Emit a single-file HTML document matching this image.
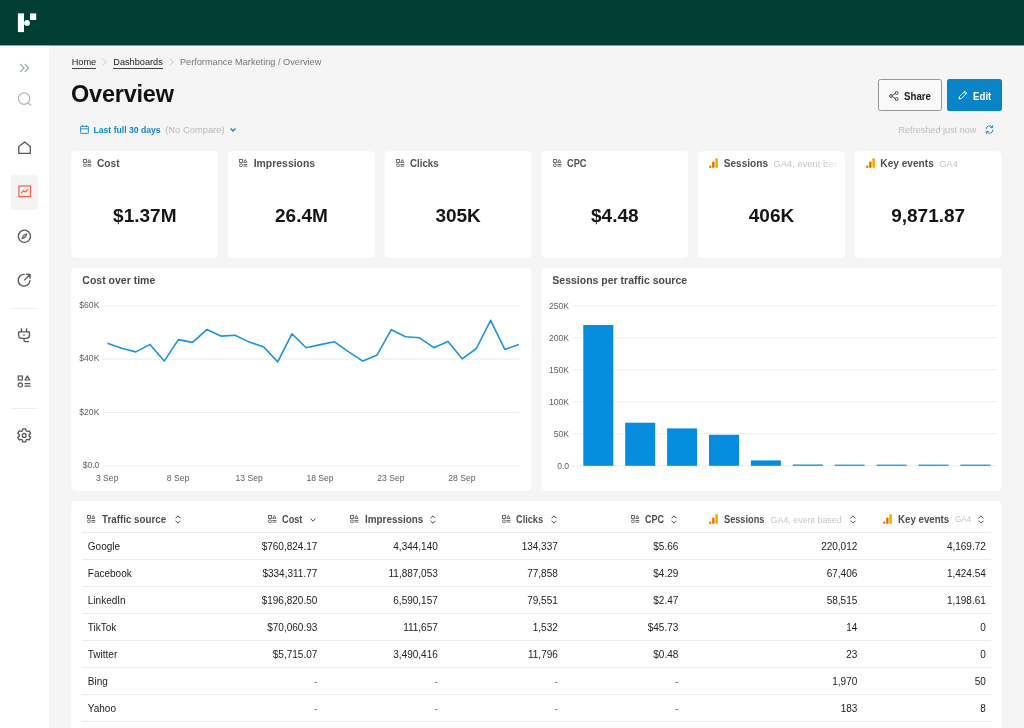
<!DOCTYPE html>
<html lang="en"><head><meta charset="utf-8"><title>Overview</title>
<style>
*{box-sizing:border-box;margin:0;padding:0}
html,body{width:1024px;height:728px;overflow:hidden}
body{background:#f5f5f5;font-family:"Liberation Sans",sans-serif;color:#1a1a1a;position:relative}
.top{position:absolute;left:0;top:0;width:1024px;height:45px}
.side{position:absolute;left:0;top:45.5px;width:49px;height:683px}
.side svg{position:absolute}
.act{position:absolute;left:11.2px;top:129.2px;width:26.5px;height:35px;border-radius:3px;background:#f4f4f4}
.dv{position:absolute;left:11.4px;width:26.4px;height:1px;background:#efefef}
.bc{position:absolute;left:71.7px;top:55.5px;font-size:9.2px;line-height:12px;color:#777;white-space:nowrap}
.bc a{color:#222;text-decoration:none;border-bottom:1px solid #444;padding-bottom:1.2px}
.bc svg{display:inline-block;vertical-align:-1.2px;margin:0 6.2px 0 5.9px}
h1{position:absolute;left:71.1px;top:79.7px;font-size:23.45px;line-height:28px;font-weight:700;color:#111;letter-spacing:-0.2px}
.dr{position:absolute;left:80px;top:123.5px;height:12px;font-size:8.65px;line-height:12px;white-space:nowrap;color:#1586c9;font-weight:700}
.dr svg{position:absolute}
.dr .t{position:absolute;left:13.5px;top:0}
.dr .nc{position:absolute;left:85.2px;top:0;color:#b9b9b9;font-weight:400;font-size:9.4px}
.btn{position:absolute;top:79px;height:32px;border-radius:2.5px;font-size:10.6px;font-weight:700;line-height:32px}
.share{left:878px;width:64px;border:1px solid #959595;background:#f9f9f9;color:#1a1a1a}
.edit{left:947px;width:54.6px;background:#0a84c8;color:#fff}
.btn span{position:absolute;top:-0.5px;transform:scaleX(0.915);transform-origin:0 50%}
.btn svg{position:absolute}
.rf{position:absolute;left:898.5px;top:123.6px;font-size:9.1px;line-height:12px;color:#bdbdbd;white-space:nowrap}
.card{position:absolute}
.kpi{top:151.5px;width:146.6px;height:106px;overflow:hidden}
.kt{position:absolute;left:11px;top:6.4px;height:12px;right:0;white-space:nowrap;font-size:10.3px;line-height:12px;font-weight:700;color:#505050}
.kt .ic{position:absolute;left:0.3px;top:1.2px}
.kt .ktt{margin-left:14.5px}
.kt.ga .ic{left:0.2px;top:0.6px}
.kt .sub{font-weight:400;color:#c4c4c4;font-size:9.2px;letter-spacing:0.1px;margin-left:5.5px}
.fade{position:absolute;right:0;top:0;width:22px;height:14px;background:linear-gradient(90deg,rgba(255,255,255,0),#fff 80%)}
.kv{position:absolute;left:0;right:0;top:52px;text-align:center;font-size:19px;line-height:24px;font-weight:700;color:#151515}
.ch{top:267.5px;width:460px;height:223.3px}
.ch h3{position:absolute;left:10.8px;top:6.5px;font-size:10.5px;line-height:12px;font-weight:700;color:#4a4a4a}
.ch svg{position:absolute;left:0;top:0}
.ch text{font-family:"Liberation Sans",sans-serif;font-size:8.6px;fill:#5e5e5e}
.ch line{stroke:#ebebeb;stroke-width:1}
.tb{left:71.5px;top:501px;width:930px;height:240px}
.th,.tr{position:absolute;left:10.5px;width:909px}
.th{top:0;height:32px;border-bottom:1px solid #eaeaea}
.tr{height:27px;border-bottom:1px solid #ececec;font-size:10px;line-height:26px;color:#222}
.tr span{position:absolute;top:1px;white-space:nowrap}
.c0{left:5.8px}.d{color:#666;margin-top:-0.5px}
.c1{right:673.7px}.c2{right:553.2px}.c3{right:433.2px}.c4{right:312.7px}.c5{right:133.7px}.c6{right:5.2px}
.th .h{position:absolute;top:12.7px;height:12px;font-size:10.3px;line-height:12px;font-weight:700;color:#4d4d4d;white-space:nowrap;transform-origin:0 50%}
.th svg{position:absolute}
.th .s{position:absolute;top:12.7px;font-size:8.9px;line-height:12px;color:#c6c6c6;white-space:nowrap}
#pg{position:absolute;left:0;top:0;width:1024px;height:728px;overflow:hidden;will-change:transform;transform:translateZ(0)}
</style></head><body><div id="pg">
<svg style="position:absolute;left:0;top:0" width="1024" height="728" viewBox="0 0 1024 728" fill="#fff"><rect x="0" y="45" width="49" height="683"/><rect x="0" y="0" width="1024" height="45.45" fill="#003d33"/><rect x="71.30" y="151.3" width="146.9" height="106.8" rx="4.5"/><rect x="227.98" y="151.3" width="146.9" height="106.8" rx="4.5"/><rect x="384.66" y="151.3" width="146.9" height="106.8" rx="4.5"/><rect x="541.34" y="151.3" width="146.9" height="106.8" rx="4.5"/><rect x="698.02" y="151.3" width="146.9" height="106.8" rx="4.5"/><rect x="854.70" y="151.3" width="146.9" height="106.8" rx="4.5"/><rect x="71.3" y="267.8" width="460.2" height="223.1" rx="4.5"/><rect x="541.7" y="267.8" width="459.9" height="223.1" rx="4.5"/><rect x="71.3" y="501" width="930.3" height="240" rx="4.5"/></svg>
<div class="top"><svg width="40" height="46" viewBox="0 0 40 46" style="position:absolute;left:0;top:0"><rect x="17.9" y="13.4" width="6.1" height="18.7" fill="#fff"/><rect x="30" y="13.4" width="6.2" height="6.6" fill="#fff"/><circle cx="27" cy="22.9" r="2.9" fill="#fff"/></svg></div>
<div class="side">
<svg style="left:18px;top:17px" width="12" height="10" viewBox="0 0 12 10" fill="none" stroke="#93aea6" stroke-width="1.15"><path d="M2.2 1 L6 5 L2.2 9M6.8 1 L10.6 5 L6.8 9"/></svg>
<svg style="left:16px;top:44px" width="18" height="18" viewBox="0 0 18 18" fill="none" stroke="#b3b3b3" stroke-width="1.2" stroke-linecap="round"><circle cx="8.1" cy="8.6" r="5.7"/><path d="M12.3 12.8 L14.8 15.3"/></svg>
<svg style="left:16px;top:93px" width="18" height="18" viewBox="0 0 18 18" fill="none" stroke="#555" stroke-width="1.3" stroke-linejoin="round"><path d="M2.8 7.6 L8.6 3 L14.3 7.6 V14.4 H2.8 Z"/></svg>
<div class="act"></div>
<svg style="left:16px;top:137px" width="18" height="18" viewBox="0 0 18 18" fill="none" stroke="#f0604d" stroke-width="1.2"><rect x="2.9" y="3" width="11.6" height="10.6"/><path d="M5.2 10.2 L7.6 7.6 L9.4 9 L12.3 6.3" stroke-width="1.3"/></svg>
<svg style="left:16px;top:182px" width="18" height="18" viewBox="0 0 18 18" fill="none" stroke="#555" stroke-width="1.3"><circle cx="8.4" cy="8.3" r="6.1"/><path d="M11 5.7 L9.5 9.4 L5.8 10.9 L7.3 7.2 Z" stroke-width="0.9" stroke-linejoin="round" fill="#555" fill-opacity="0.55"/></svg>
<svg style="left:16px;top:225px" width="18" height="18" viewBox="0 0 18 18" fill="none" stroke="#555" stroke-width="1.3" stroke-linecap="round" stroke-linejoin="round"><path d="M8.2 3.3 A5.9 5.9 0 1 0 14 9.6"/><path d="M8.6 8.9 L13.8 3.7M10.3 3.4 H14.1 V7.2"/></svg>
<div class="dv" style="top:262.9px"></div>
<svg style="left:16px;top:281px" width="18" height="18" viewBox="0 0 18 18" fill="none" stroke="#555" stroke-width="1.3" stroke-linecap="round" stroke-linejoin="round"><path d="M5.4 1.8 V4.6M10.6 1.8 V4.6M2.6 4.8 H13.4 V8.2 Q13.4 11.3 10.3 11.3 H5.7 Q2.6 11.3 2.6 8.2 Z M8 11.4 V13 Q8 14.6 9.6 14.6 H12.6"/><path d="M7.3 8 H8.7" stroke-width="1.2"/></svg>
<svg style="left:16px;top:327px" width="18" height="18" viewBox="0 0 18 18" fill="none" stroke="#555" stroke-width="1.2"><rect x="2.3" y="3" width="4" height="4"/><path d="M11.4 3 L13.8 7 H9 Z" stroke-linejoin="round"/><circle cx="4.3" cy="11.9" r="2.1"/><path d="M8.6 10.6 H14.4M8.6 13.2 H14.4"/></svg>
<div class="dv" style="top:362.9px"></div>
<svg style="left:16px;top:381px" width="18" height="18" viewBox="0 0 18 18" fill="none" stroke="#555" stroke-width="1.3" stroke-linejoin="round"><path d="M9.71 1.87 L6.69 1.87 L6.41 3.73 L5.05 4.51 L3.30 3.83 L1.79 6.44 L3.26 7.62 L3.26 9.18 L1.79 10.36 L3.30 12.97 L5.05 12.29 L6.41 13.07 L6.69 14.93 L9.71 14.93 L9.99 13.07 L11.35 12.29 L13.10 12.97 L14.61 10.36 L13.14 9.18 L13.14 7.62 L14.61 6.44 L13.10 3.83 L11.35 4.51 L9.99 3.73 Z"/><circle cx="8.2" cy="8.4" r="1.9"/></svg>
</div>
<div class="bc"><a>Home</a><svg width="5" height="8" viewBox="0 0 5 8" fill="none" stroke="#c4c4c4" stroke-width="0.9"><path d="M0.8 0.6 L4.2 4 L0.8 7.4"/></svg><a>Dashboards</a><svg width="5" height="8" viewBox="0 0 5 8" fill="none" stroke="#c4c4c4" stroke-width="0.9"><path d="M0.8 0.6 L4.2 4 L0.8 7.4"/></svg>Performance Marketing / Overview</div>
<h1>Overview</h1>
<div class="dr"><svg style="left:0;top:1.5px" width="9" height="9" viewBox="0 0 9 9" fill="none" stroke="#1586c9" stroke-width="0.9"><rect x="0.6" y="1.4" width="7.8" height="7" rx="0.6"/><path d="M0.6 3.8 H8.4M2.6 0.2 V2.2M6.4 0.2 V2.2"/></svg><span class="t">Last full 30 days</span><span class="nc">(No Compare)</span><svg style="left:150px;top:4px" width="6" height="4" viewBox="0 0 6 4" fill="none" stroke="#1586c9" stroke-width="1.4"><path d="M0.6 0.6 L3 3 L5.4 0.6"/></svg></div>
<div class="btn share"><svg style="left:10.4px;top:10.5px" width="10" height="10" viewBox="0 0 10 10" fill="none" stroke="#333" stroke-width="0.9"><circle cx="7.6" cy="1.9" r="1.4"/><circle cx="2" cy="5" r="1.4"/><circle cx="7.6" cy="8.1" r="1.4"/><path d="M3.3 4.3 L6.3 2.6M3.3 5.7 L6.3 7.4"/></svg><span style="left:24.8px">Share</span></div>
<div class="btn edit"><svg style="left:10.6px;top:10.6px" width="10" height="10" viewBox="0 0 10 10" fill="none" stroke="#fff" stroke-width="1" stroke-linejoin="round"><path d="M1 9 L1.5 6.6 L6.9 1.2 L8.8 3.1 L3.4 8.5 Z"/><path d="M5.9 2.2 L7.8 4.1"/></svg><span style="left:25.8px;top:0.5px">Edit</span></div>
<div class="rf">Refreshed just now</div>
<svg style="position:absolute;left:984.6px;top:125.4px" width="9" height="9" viewBox="0 0 9 9" fill="none" stroke="#1586c9" stroke-width="0.95" stroke-linecap="round"><path d="M1 4 A3.5 3.5 0 0 1 7.3 2.2M8 5 A3.5 3.5 0 0 1 1.7 6.8"/><path d="M7.6 0.6 V2.6 H5.6M1.4 8.4 V6.4 H3.4" stroke-width="0.9"/></svg>
<div class="card kpi" style="left:71.50px"><div class="kt"><svg class="ic" width="9" height="8.3" viewBox="0 0 9 8.3" fill="none" stroke="#6a6a6a" stroke-width="1"><rect x="0.5" y="0.5" width="2.9" height="2.9"/><path d="M6.3 0.5 L7.9 3.4 H4.7 Z" stroke-linejoin="round"/><circle cx="1.95" cy="6.3" r="1.45"/><path d="M4.4 5.5H8.3M4.4 7.1H8.3"/></svg><span class="ktt" style="font-size:10.2px">Cost</span><i class="fade"></i></div><div class="kv">$1.37M</div></div>
<div class="card kpi" style="left:228.17px"><div class="kt"><svg class="ic" width="9" height="8.3" viewBox="0 0 9 8.3" fill="none" stroke="#6a6a6a" stroke-width="1"><rect x="0.5" y="0.5" width="2.9" height="2.9"/><path d="M6.3 0.5 L7.9 3.4 H4.7 Z" stroke-linejoin="round"/><circle cx="1.95" cy="6.3" r="1.45"/><path d="M4.4 5.5H8.3M4.4 7.1H8.3"/></svg><span class="ktt" style="font-size:10.45px">Impressions</span><i class="fade"></i></div><div class="kv">26.4M</div></div>
<div class="card kpi" style="left:384.84px"><div class="kt"><svg class="ic" width="9" height="8.3" viewBox="0 0 9 8.3" fill="none" stroke="#6a6a6a" stroke-width="1"><rect x="0.5" y="0.5" width="2.9" height="2.9"/><path d="M6.3 0.5 L7.9 3.4 H4.7 Z" stroke-linejoin="round"/><circle cx="1.95" cy="6.3" r="1.45"/><path d="M4.4 5.5H8.3M4.4 7.1H8.3"/></svg><span class="ktt" style="font-size:10.3px;display:inline-block;transform-origin:0 50%;transform:scaleX(0.945)">Clicks</span><i class="fade"></i></div><div class="kv">305K</div></div>
<div class="card kpi" style="left:541.51px"><div class="kt"><svg class="ic" width="9" height="8.3" viewBox="0 0 9 8.3" fill="none" stroke="#6a6a6a" stroke-width="1"><rect x="0.5" y="0.5" width="2.9" height="2.9"/><path d="M6.3 0.5 L7.9 3.4 H4.7 Z" stroke-linejoin="round"/><circle cx="1.95" cy="6.3" r="1.45"/><path d="M4.4 5.5H8.3M4.4 7.1H8.3"/></svg><span class="ktt" style="font-size:10.3px;display:inline-block;transform-origin:0 50%;transform:scaleX(0.895)">CPC</span><i class="fade"></i></div><div class="kv">$4.48</div></div>
<div class="card kpi" style="left:698.18px"><div class="kt ga"><svg class="ic" width="9" height="10" viewBox="0 0 9 10"><rect x="6.3" y="0" width="2.6" height="10" rx="1.2" fill="#f9ab00"/><rect x="3.1" y="3.6" width="2.5" height="6.4" rx="1.2" fill="#e37400"/><circle cx="1.2" cy="8.8" r="1.2" fill="#e37400"/></svg><span class="ktt" style="font-size:10.1px">Sessions</span><span class="sub">GA4, event based</span><i class="fade"></i></div><div class="kv">406K</div></div>
<div class="card kpi" style="left:854.85px"><div class="kt ga"><svg class="ic" width="9" height="10" viewBox="0 0 9 10"><rect x="6.3" y="0" width="2.6" height="10" rx="1.2" fill="#f9ab00"/><rect x="3.1" y="3.6" width="2.5" height="6.4" rx="1.2" fill="#e37400"/><circle cx="1.2" cy="8.8" r="1.2" fill="#e37400"/></svg><span class="ktt" style="font-size:10.15px">Key events</span><span class="sub">GA4</span><i class="fade"></i></div><div class="kv">9,871.87</div></div>

<div class="card ch" style="left:71.5px"><h3>Cost over time</h3><svg width="460" height="223" viewBox="0 0 460 223"><line x1="30.2" x2="447.2" y1="197.8" y2="197.8"/><line x1="30.2" x2="447.2" y1="144.5" y2="144.5"/><line x1="30.2" x2="447.2" y1="91.1" y2="91.1"/><line x1="30.2" x2="447.2" y1="37.8" y2="37.8"/><text x="27.4" y="200.1" text-anchor="end">$0.0</text><text x="27.4" y="146.8" text-anchor="end">$20K</text><text x="27.4" y="93.4" text-anchor="end">$40K</text><text x="27.4" y="40.1" text-anchor="end">$60K</text><text x="35.2" y="212.9" text-anchor="middle">3 Sep</text><text x="106.1" y="212.9" text-anchor="middle">8 Sep</text><text x="177.1" y="212.9" text-anchor="middle">13 Sep</text><text x="248.0" y="212.9" text-anchor="middle">18 Sep</text><text x="318.9" y="212.9" text-anchor="middle">23 Sep</text><text x="389.9" y="212.9" text-anchor="middle">28 Sep</text><polyline points="35.4,75.3 49.6,80.3 63.8,83.9 78.0,76.4 92.2,93.1 106.4,71.6 120.6,74.4 134.8,61.6 148.9,68.1 163.1,67.3 177.3,74.1 191.5,78.8 205.7,93.9 219.9,65.8 234.1,79.8 248.3,76.6 262.5,73.8 276.7,83.8 290.9,93.1 305.1,86.9 319.3,61.7 333.5,68.8 347.6,69.8 361.8,79.7 376.0,73.4 390.2,90.8 404.4,80.5 418.6,52.3 432.8,81.4 447.0,76.4" fill="none" stroke="#1a93e0" stroke-width="1.6" stroke-linejoin="round"/></svg></div>
<div class="card ch" style="left:541.5px"><h3>Sessions per traffic source</h3><svg width="460" height="223" viewBox="0 0 460 223"><line x1="29.8" x2="454.6" y1="197.8" y2="197.8"/><line x1="29.8" x2="454.6" y1="165.8" y2="165.8"/><line x1="29.8" x2="454.6" y1="133.8" y2="133.8"/><line x1="29.8" x2="454.6" y1="101.8" y2="101.8"/><line x1="29.8" x2="454.6" y1="69.8" y2="69.8"/><line x1="29.8" x2="454.6" y1="37.8" y2="37.8"/><text x="27.1" y="200.6" text-anchor="end">0.0</text><text x="27.1" y="168.6" text-anchor="end">50K</text><text x="27.1" y="136.6" text-anchor="end">100K</text><text x="27.1" y="104.6" text-anchor="end">150K</text><text x="27.1" y="72.6" text-anchor="end">200K</text><text x="27.1" y="40.6" text-anchor="end">250K</text><g fill="#078de0"><rect x="41.3" y="57.0" width="30" height="140.8"/><rect x="83.2" y="154.7" width="30" height="43.1"/><rect x="125.1" y="160.4" width="30" height="37.4"/><rect x="167.0" y="166.8" width="30" height="31.0"/><rect x="208.9" y="192.4" width="30" height="5.4"/><rect x="250.8" y="196.5" width="30" height="1.3"/><rect x="292.7" y="196.6" width="30" height="1.2"/><rect x="334.6" y="196.6" width="30" height="1.2"/><rect x="376.5" y="196.6" width="30" height="1.2"/><rect x="418.4" y="196.6" width="30" height="1.2"/></g></svg></div>
<div class="card tb">
<div class="th">
<svg style="left:5.3px;top:14.3px" width="9" height="8.3" viewBox="0 0 9 8.3" fill="none" stroke="#6a6a6a" stroke-width="1"><rect x="0.5" y="0.5" width="2.9" height="2.9"/><path d="M6.3 0.5 L7.9 3.4 H4.7 Z" stroke-linejoin="round"/><circle cx="1.95" cy="6.3" r="1.45"/><path d="M4.4 5.5H8.3M4.4 7.1H8.3"/></svg><span class="h" style="left:20px;transform:scaleX(0.951)">Traffic source</span><svg style="left:93px;top:14.2px" width="6" height="9" viewBox="0 0 6 9" fill="none" stroke="#484848" stroke-width="1"><path d="M0.6 3.2 L3 0.8 L5.4 3.2M0.6 5.8 L3 8.2 L5.4 5.8"/></svg>
<svg style="left:185.6px;top:14.3px" width="9" height="8.3" viewBox="0 0 9 8.3" fill="none" stroke="#6a6a6a" stroke-width="1"><rect x="0.5" y="0.5" width="2.9" height="2.9"/><path d="M6.3 0.5 L7.9 3.4 H4.7 Z" stroke-linejoin="round"/><circle cx="1.95" cy="6.3" r="1.45"/><path d="M4.4 5.5H8.3M4.4 7.1H8.3"/></svg><span class="h" style="left:200.3px;transform:scaleX(0.893)">Cost</span><svg style="left:228.2px;top:16.8px" width="6" height="4" viewBox="0 0 6 4" fill="none" stroke="#484848" stroke-width="1"><path d="M0.5 0.6 L3 3.2 L5.5 0.6"/></svg><svg style="left:268.0px;top:14.3px" width="9" height="8.3" viewBox="0 0 9 8.3" fill="none" stroke="#6a6a6a" stroke-width="1"><rect x="0.5" y="0.5" width="2.9" height="2.9"/><path d="M6.3 0.5 L7.9 3.4 H4.7 Z" stroke-linejoin="round"/><circle cx="1.95" cy="6.3" r="1.45"/><path d="M4.4 5.5H8.3M4.4 7.1H8.3"/></svg><span class="h" style="left:282.5px;transform:scaleX(0.961)">Impressions</span><svg style="left:348.2px;top:14.2px" width="6" height="9" viewBox="0 0 6 9" fill="none" stroke="#484848" stroke-width="1"><path d="M0.6 3.2 L3 0.8 L5.4 3.2M0.6 5.8 L3 8.2 L5.4 5.8"/></svg><svg style="left:419.6px;top:14.3px" width="9" height="8.3" viewBox="0 0 9 8.3" fill="none" stroke="#6a6a6a" stroke-width="1"><rect x="0.5" y="0.5" width="2.9" height="2.9"/><path d="M6.3 0.5 L7.9 3.4 H4.7 Z" stroke-linejoin="round"/><circle cx="1.95" cy="6.3" r="1.45"/><path d="M4.4 5.5H8.3M4.4 7.1H8.3"/></svg><span class="h" style="left:434.4px;transform:scaleX(0.893)">Clicks</span><svg style="left:468.6px;top:14.2px" width="6" height="9" viewBox="0 0 6 9" fill="none" stroke="#484848" stroke-width="1"><path d="M0.6 3.2 L3 0.8 L5.4 3.2M0.6 5.8 L3 8.2 L5.4 5.8"/></svg><svg style="left:548.6px;top:14.3px" width="9" height="8.3" viewBox="0 0 9 8.3" fill="none" stroke="#6a6a6a" stroke-width="1"><rect x="0.5" y="0.5" width="2.9" height="2.9"/><path d="M6.3 0.5 L7.9 3.4 H4.7 Z" stroke-linejoin="round"/><circle cx="1.95" cy="6.3" r="1.45"/><path d="M4.4 5.5H8.3M4.4 7.1H8.3"/></svg><span class="h" style="left:563.4px;transform:scaleX(0.874)">CPC</span><svg style="left:588.8px;top:14.2px" width="6" height="9" viewBox="0 0 6 9" fill="none" stroke="#484848" stroke-width="1"><path d="M0.6 3.2 L3 0.8 L5.4 3.2M0.6 5.8 L3 8.2 L5.4 5.8"/></svg><svg style="left:627.3px;top:13.4px" width="9" height="10" viewBox="0 0 9 10"><rect x="6.3" y="0" width="2.6" height="10" rx="1.2" fill="#f9ab00"/><rect x="3.1" y="3.6" width="2.5" height="6.4" rx="1.2" fill="#e37400"/><circle cx="1.2" cy="8.8" r="1.2" fill="#e37400"/></svg><span class="h" style="left:642.4px;transform:scaleX(0.893)">Sessions</span><span class="s" style="left:688.6px;font-size:8.9px">GA4, event based</span><svg style="left:767.6px;top:14.2px" width="6" height="9" viewBox="0 0 6 9" fill="none" stroke="#484848" stroke-width="1"><path d="M0.6 3.2 L3 0.8 L5.4 3.2M0.6 5.8 L3 8.2 L5.4 5.8"/></svg><svg style="left:800.8px;top:13.4px" width="9" height="10" viewBox="0 0 9 10"><rect x="6.3" y="0" width="2.6" height="10" rx="1.2" fill="#f9ab00"/><rect x="3.1" y="3.6" width="2.5" height="6.4" rx="1.2" fill="#e37400"/><circle cx="1.2" cy="8.8" r="1.2" fill="#e37400"/></svg><span class="h" style="left:815.8px;transform:scaleX(0.942)">Key events</span><span class="s" style="left:873.0px;font-size:8.2px">GA4</span><svg style="left:896.2px;top:14.2px" width="6" height="9" viewBox="0 0 6 9" fill="none" stroke="#484848" stroke-width="1"><path d="M0.6 3.2 L3 0.8 L5.4 3.2M0.6 5.8 L3 8.2 L5.4 5.8"/></svg>
</div>
<div style="position:absolute;left:0;top:32px;width:930px">
<div class="tr" style="top:0px"><span class="c0">Google</span><span class="c1">$760,824.17</span><span class="c2">4,344,140</span><span class="c3">134,337</span><span class="c4">$5.66</span><span class="c5">220,012</span><span class="c6">4,169.72</span></div>
<div class="tr" style="top:27px"><span class="c0">Facebook</span><span class="c1">$334,311.77</span><span class="c2">11,887,053</span><span class="c3">77,858</span><span class="c4">$4.29</span><span class="c5">67,406</span><span class="c6">1,424.54</span></div>
<div class="tr" style="top:54px"><span class="c0">LinkedIn</span><span class="c1">$196,820.50</span><span class="c2">6,590,157</span><span class="c3">79,551</span><span class="c4">$2.47</span><span class="c5">58,515</span><span class="c6">1,198.61</span></div>
<div class="tr" style="top:81px"><span class="c0">TikTok</span><span class="c1">$70,060.93</span><span class="c2">111,657</span><span class="c3">1,532</span><span class="c4">$45.73</span><span class="c5">14</span><span class="c6">0</span></div>
<div class="tr" style="top:108px"><span class="c0">Twitter</span><span class="c1">$5,715.07</span><span class="c2">3,490,416</span><span class="c3">11,796</span><span class="c4">$0.48</span><span class="c5">23</span><span class="c6">0</span></div>
<div class="tr" style="top:135px"><span class="c0">Bing</span><span class="c1 d">-</span><span class="c2 d">-</span><span class="c3 d">-</span><span class="c4 d">-</span><span class="c5">1,970</span><span class="c6">50</span></div>
<div class="tr" style="top:162px"><span class="c0">Yahoo</span><span class="c1 d">-</span><span class="c2 d">-</span><span class="c3 d">-</span><span class="c4 d">-</span><span class="c5">183</span><span class="c6">8</span></div>
<div class="tr" style="top:189px"><span class="c0">DuckDuckGo</span><span class="c1 d">-</span><span class="c2 d">-</span><span class="c3 d">-</span><span class="c4 d">-</span><span class="c5">120</span><span class="c6">3</span></div>

</div>
</div>
</div></body></html>
